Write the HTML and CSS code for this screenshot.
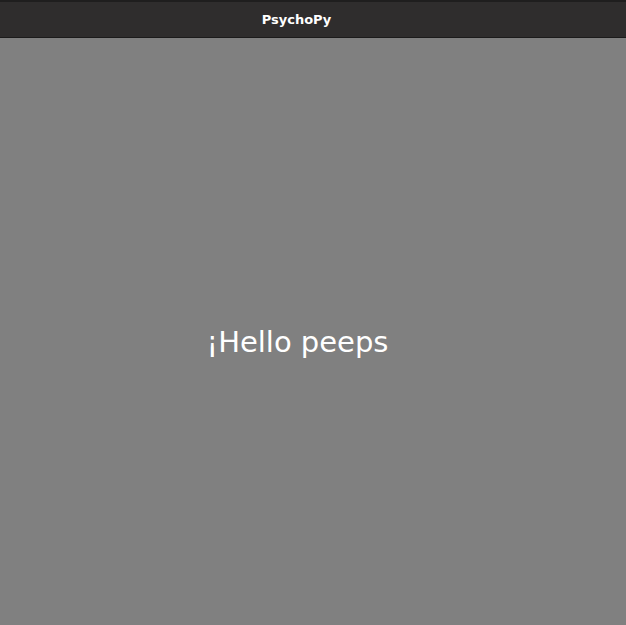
FILE: index.html
```html
<!DOCTYPE html>
<html>
<head>
<meta charset="utf-8">
<link rel="stylesheet" href="styles.css">
</head>
<body>
<div class="app">
  <div class="strip"></div>
  <header class="titlebar"><span class="title">PsychoPy</span></header>
  <main class="stage"><p class="stim">¡Hello peeps</p></main>
</div>
</body>
</html>
```
FILE: styles.css
```css
html, body { margin: 0; padding: 0; }
body { width: 626px; height: 625px; overflow: hidden; background: #808080; }
.app { display: flex; flex-direction: column; height: 625px; }
.strip { height: 2px; background: #1f1e1e; }
.titlebar {
  height: 35px;
  background: #2f2d2d;
  border-bottom: 1px solid #1c1b1b;
  display: flex;
  align-items: center;
  justify-content: center;
  padding-right: 33px;
}
.title {
  font-family: "DejaVu Sans", sans-serif;
  font-weight: bold;
  font-size: 13px;
  color: #ffffff;
}
.stage {
  flex: 1;
  background: #808080;
  display: flex;
  align-items: flex-start;
  justify-content: center;
  padding-top: 290px;
  padding-right: 31px;
}
.stim {
  margin: 0;
  font-family: "DejaVu Sans", sans-serif;
  font-size: 29px;
  color: #ffffff;
  line-height: 1;
}
```
